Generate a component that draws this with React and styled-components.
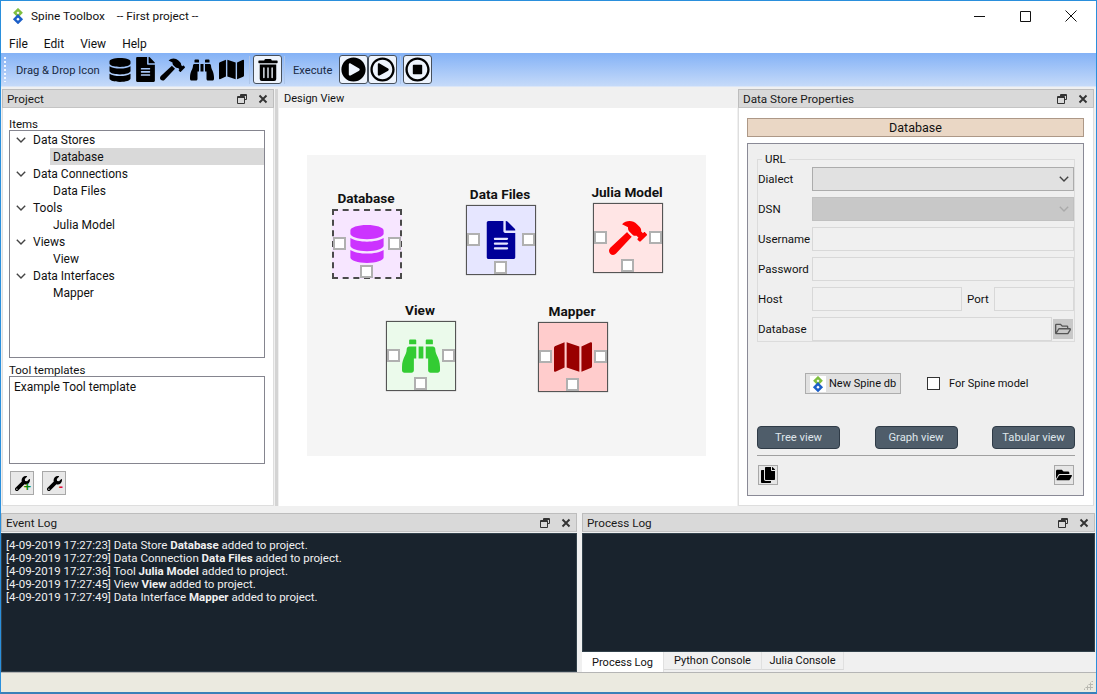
import React from "react";
import styled, { createGlobalStyle } from "styled-components";
import { FaDatabase, FaFileAlt, FaHammer, FaBinoculars, FaMap, FaTrashAlt, FaPlayCircle, FaRegPlayCircle, FaRegStopCircle, FaCopy, FaFolderOpen, FaRegFolderOpen, FaWrench } from "react-icons/fa";

const Global = createGlobalStyle`
  html, body { margin: 0; padding: 0; background: #fff; }
  * { box-sizing: border-box; }
  body { font-family: Roboto, "Open Sans", sans-serif; font-size: 12px; color: #111; }
`;
const Win = styled.div`
  width: 1097px; height: 694px; overflow: hidden; display: flex; flex-direction: column;
  border-top: 1px solid #2a8fdc; border-left: 1px solid #2a8fdc; border-right: 1px solid #2a8fdc; border-bottom: 2px solid #3a80b8;
  background: #f0f0f0;
`;
const TitleBar = styled.div`
  height: 34px; flex: none; background: #fff; display: flex; align-items: center; padding: 0 0 4px 9px; font-size: 11.8px;
`;
const TitleText = styled.span` margin-left: 5px; `;
const ProjectName = styled.span` margin-left: 12px; `;
const WinButtons = styled.div` margin-left: auto; margin-right: 2px; display: flex; `;
const WinButton = styled.div` width: 46px; height: 30px; display: flex; align-items: center; justify-content: center; `;
const MenuBar = styled.div`
  height: 18px; flex: none; background: #fff; display: flex; gap: 16px; padding-left: 8px; align-items: center; font-size: 12px;
`;
const Toolbar = styled.div`
  height: 34px; flex: none; display: flex; align-items: center; position: relative; padding-left: 15px;
  background: linear-gradient(#84b2f6, #c5daf9);
  border-bottom: 1px solid #dbe6f7;
`;
const Grip = styled.div`
  position: absolute; left: 3px; top: 4px; bottom: 4px; width: 2px;
  background: repeating-linear-gradient(#f4f8ff 0 2px, transparent 2px 4px);
`;
const ToolLabel = styled.span` font-size: 11.2px; color: #1a2a44; width: ${p => p.$w}px; white-space: nowrap; padding-top: 2px; `;
const ToolIcon = styled.span` display: flex; width: ${p => p.$w}px; justify-content: center; margin-left: ${p => p.$ml}px; color: #000; `;
const ToolSep = styled.div` width: 1px; height: 28px; background: #aec6ea; margin: 0 ${p => p.$r || 3}px 0 ${p => p.$l || 4}px; `;
const ToolButton = styled.div`
  width: 29px; height: 29px; border: 1px solid #47505c; border-radius: 3px; background: #eef4fd;
  display: flex; align-items: center; justify-content: center; color: #000; margin-left: ${p => p.$ml || 0}px;
`;
const Main = styled.div` height: 422px; flex: none; display: flex; background: #f0f0f0; `;
const Dock = styled.div`
  width: ${p => p.$w}px; flex: none; display: flex; flex-direction: column; margin: 2px 0 3px 1px;
`;
const DockTitle = styled.div`
  height: 19px; flex: none; display: flex; align-items: center; background: #d9d9d9; border: 1px solid #bdbdbd; border-bottom-color: #c4c4c4;
  padding: 0 5px 0 4px; font-size: 11.7px; color: #1a1a1a;
`;
const DockIcons = styled.div` margin-left: auto; display: flex; gap: 11px; align-items: center; `;
const DockBody = styled.div`
  flex: 1; min-height: 0; background: #fff; border: 1px solid #dedede; border-top: 0; display: flex; flex-direction: column;
`;
const Gutter = styled.div` width: ${p => p.$w}px; flex: none; background: ${p => p.$c || "#f0f0f0"}; margin: ${p => p.$m || 0}; `;
const Caption = styled.div` font-size: 11.5px; height: 12px; line-height: 13px; padding-left: 6px; margin-top: ${p => p.$mt}px; `;
const Tree = styled.div` width: 256px; height: 228px; margin-left: 6px; border: 1px solid #85858f; `;
const TreeRow = styled.div`
  height: 17px; display: flex; align-items: center; font-size: 12px; padding-left: ${p => p.$child ? 3 : 6}px;
  margin-left: ${p => p.$child ? 40 : 0}px; background: ${p => p.$on ? "#d9d9d9" : "transparent"};
`;
const Chevron = styled.span` display: flex; width: 17px; `;
const ListBox = styled.div` width: 256px; height: 88px; margin-left: 6px; border: 1px solid #85858f; padding: 3px 4px; font-size: 12px; `;
const SquareRow = styled.div` display: flex; gap: 8px; padding: 7px 0 0 7px; `;
const SquareButton = styled.div`
  position: relative; width: 24px; height: 24px; border: 1px solid #a8a8a8; background: #e8e8e8; display: flex; align-items: center; justify-content: center; color: #000;
`;
const Badge = styled.span` position: absolute; right: 2px; bottom: 3px; font: bold 13px/9px "Liberation Sans", sans-serif; color: ${p => p.$c}; `;
const DesignTitle = styled.div` height: 19px; flex: none; display: flex; align-items: center; padding-left: 5px; font-size: 11px; background: #f0f0f0; `;
const DesignBody = styled.div` flex: 1; background: #fff; padding: 47px 0 0 28px; `;
const Scene = styled.div` position: relative; width: 399px; height: 301px; background: #f5f5f5; `;
const Node = styled.div`
  position: absolute; left: ${p => p.$x}px; top: ${p => p.$y}px; width: 70px; height: 70px; background: ${p => p.$bg};
  border: 1px solid ${p => p.$sel ? "transparent" : "#555"}; box-shadow: ${p => p.$sel ? "none" : "0 0 1px #888"};
  outline: ${p => p.$sel ? "2px dashed #4a4a4a" : "none"}; outline-offset: -2px;
  display: flex; align-items: center; justify-content: center; color: ${p => p.$fg};
`;
const NodeLabel = styled.div`
  position: absolute; left: -21px; right: -19px; top: -20px; text-align: center; font-weight: 700; font-size: 13.6px; line-height: 16px; color: #111; white-space: nowrap;
`;
const Port = styled.div`
  position: absolute; width: 13px; height: 13px; background: #fff; border: 2px solid #b0b0b0;
  ${p => p.$side === "l" ? "left: 0; top: 27px;" : p.$side === "r" ? "right: 0; top: 27px;" : "left: 27px; bottom: 0;"}
`;
const PropHeader = styled.div`
  height: 19px; margin: 10px 9px 6px 8px; flex: none; background: #ead7c5; border: 1px solid #ad9887; display: flex; align-items: center; justify-content: center; font-size: 12.5px;
`;
const Form = styled.div` flex: none; height: 353px; margin: 0 9px 0 8px; background: #efefef; border: 1px solid #8a8a96; display: flex; flex-direction: column; padding: 15px 8px 0 9px; position: relative; `;
const Fieldset = styled.div` position: relative; height: 183px; border: 1px solid #dcdcdc; padding-top: 7px; display: flex; flex-direction: column; gap: 6px; `;
const Legend = styled.span` position: absolute; left: 4px; top: -8px; background: #efefef; padding: 0 3px; font-size: 11.5px; line-height: 14px; `;
const FormRow = styled.div` display: flex; align-items: center; height: 24px; `;
const FormLabel = styled.span` width: 54px; flex: none; font-size: 11.5px; `;
const Combo = styled.div`
  flex: 1; height: 24px; background: ${p => p.$off ? "#c8c8c8" : "#e1e1e1"}; border: 1px solid ${p => p.$off ? "#c0c0c0" : "#acacac"}; display: flex; align-items: center; justify-content: flex-end; padding-right: 4px;
`;
const Input = styled.div` flex: ${p => p.$w ? "none" : 1}; width: ${p => p.$w ? p.$w + "px" : "auto"}; height: 24px; background: #f0f0f0; border: 1px solid #d8d8d8; `;
const PortLabel = styled.span` font-size: 11.5px; margin: 0 5px 0 5px; `;
const BrowseButton = styled.div` width: 20px; height: 20px; margin: 0 1px; background: #c8c8c8; display: flex; align-items: center; justify-content: center; color: #555; `;
const NewRow = styled.div` display: flex; align-items: center; margin: 31px 0 0 48px; height: 21px; `;
const NewButton = styled.div` width: 96px; height: 21px; background: #e1e1e1; border: 1px solid #adadad; display: flex; align-items: center; padding-left: 4px; gap: 3px; font-size: 11px; white-space: nowrap; `;
const LogoBack = styled.span` display: flex; background: #fff; `;
const Check = styled.div` width: 13px; height: 13px; margin-left: 26px; border: 1px solid #333; background: #fff; `;
const CheckLabel = styled.span` font-size: 11px; margin-left: 9px; `;
const ViewRow = styled.div` display: flex; justify-content: space-between; margin-top: 32px; `;
const ViewButton = styled.div`
  width: 83px; height: 23px; background: #4f5d6a; border: 1px solid #2f3b47; border-radius: 4px; color: #dfe6ea; font-size: 11.2px; display: flex; align-items: center; justify-content: center;
`;
const Rule = styled.div` height: 1px; background: #a0a0a0; margin-top: 6px; `;
const FootRow = styled.div` display: flex; justify-content: space-between; padding: 9px 1px 0; `;
const FootButton = styled.div` width: 20px; height: 20px; background: #e6e6e6; border: 1px solid #a8a8a8; display: flex; align-items: center; justify-content: center; color: #000; `;
const Bottom = styled.div` height: 163px; flex: none; display: flex; gap: 5px; background: #f0f0f0; padding-top: 4px; `;
const BottomDock = styled.div` width: ${p => p.$w}px; flex: none; display: flex; flex-direction: column; `;
const Terminal = styled.div`
  flex: 1; margin-top: 1px; background: #19232d; border: 1px solid #32414b; color: #f0f0f0; font-size: 11.5px; line-height: 13px; padding: 5px 4px; white-space: nowrap;
`;
const LogLine = styled.div``;
const Tabs = styled.div` height: 20px; flex: none; display: flex; align-items: flex-end; background: #f0f0f0; `;
const Tab = styled.div`
  height: ${p => p.$on ? 20 : 18}px; width: ${p => p.$w}px; display: flex; align-items: center; justify-content: center; font-size: 11px;
  background: ${p => p.$on ? "#fff" : "#f0f0f0"}; border-right: 1px solid #e0e0e0; border-bottom: ${p => p.$on ? 0 : "1px solid #d9d9d9"}; align-self: flex-start;
`;
const Status = styled.div`
  flex: 1; background: #ebeae0; border-top: 1px solid #b5b5b5; position: relative;
`;
const SizeGrip = styled.div`
  position: absolute; right: 3px; bottom: 2px; width: 10px; height: 10px;
  background: radial-gradient(circle, #b8b8b0 1px, transparent 1.2px) 0 0 / 3px 3px;
  clip-path: polygon(100% 0, 100% 100%, 0 100%);
`;

const Logo = ({ size = 16 }) => (
  <svg width={size} height={size} viewBox="0 0 16 16" fill="none" strokeWidth="2.4">
    <path d="M8 1.6L11.2 4.8 8 8 4.8 4.8z" stroke="#7fbf3f" />
    <path d="M8 7.8L11.4 11.2 8 14.6 4.6 11.2z" stroke="#1c5fc8" />
  </svg>
);
const ChevronDown = ({ c = "#444" }) => (
  <svg width="10" height="6" viewBox="0 0 10 6"><path d="M.8.8L5 5 9.2.8" fill="none" stroke={c} strokeWidth="1.4" /></svg>
);
const RestoreIcon = () => (
  <svg width="10" height="10" viewBox="0 0 10 10" fill="none" stroke="#333" strokeWidth="1">
    <path d="M3.5 2.5V.5h6v5h-2" /><path d="M.5 2.5h7v7h-7z" /><path d="M.5 3.5h7M3.5 1.5h6" />
  </svg>
);
const CloseIcon = () => (
  <svg width="10" height="10" viewBox="0 0 10 10"><path d="M1.5 1.5l7 7M8.5 1.5l-7 7" stroke="#333" strokeWidth="1.9" /></svg>
);
const DockControls = () => <DockIcons><RestoreIcon /><CloseIcon /></DockIcons>;

const treeData = [["Data Stores", "Database"], ["Data Connections", "Data Files"], ["Tools", "Julia Model"], ["Views", "View"], ["Data Interfaces", "Mapper"]];
const nodes = [
  { name: "Database", x: 25, y: 54, bg: "#f7e6ff", fg: "#cc33ff", sel: true, Icon: FaDatabase },
  { name: "Data Files", x: 159, y: 50, bg: "#e6e6ff", fg: "#000099", Icon: FaFileAlt },
  { name: "Julia Model", x: 286, y: 48, bg: "#ffe5e5", fg: "#ff0000", Icon: FaHammer },
  { name: "View", x: 79, y: 166, bg: "#ebfaeb", fg: "#33cc33", Icon: FaBinoculars },
  { name: "Mapper", x: 231, y: 167, bg: "#ffcccc", fg: "#990000", Icon: FaMap },
];
const logs = [
  ["[4-09-2019 17:27:23] Data Store ", "Database"],
  ["[4-09-2019 17:27:29] Data Connection ", "Data Files"],
  ["[4-09-2019 17:27:36] Tool ", "Julia Model"],
  ["[4-09-2019 17:27:45] View ", "View"],
  ["[4-09-2019 17:27:49] Data Interface ", "Mapper"],
];

export default function App() {
  return (
    <Win>
      <Global />
      <TitleBar>
        <Logo />
        <TitleText>Spine Toolbox</TitleText>
        <ProjectName>-- First project --</ProjectName>
        <WinButtons>
          <WinButton><svg width="11" height="11" viewBox="0 0 11 11"><path d="M0 5.5h11" stroke="#111" /></svg></WinButton>
          <WinButton><svg width="11" height="11" viewBox="0 0 11 11"><path d="M.5.5h10v10H.5z" fill="none" stroke="#111" /></svg></WinButton>
          <WinButton><svg width="12" height="12" viewBox="0 0 12 12"><path d="M.5.5l11 11M11.5.5l-11 11" stroke="#111" /></svg></WinButton>
        </WinButtons>
      </TitleBar>
      <MenuBar><span>File</span><span>Edit</span><span>View</span><span>Help</span></MenuBar>
      <Toolbar>
        <Grip />
        <ToolLabel $w={85}>Drag &amp; Drop Icon</ToolLabel>
        <ToolIcon $w={22} $ml={8}><FaDatabase size={24} /></ToolIcon>
        <ToolIcon $w={19} $ml={5}><FaFileAlt size={25} /></ToolIcon>
        <ToolIcon $w={25} $ml={5}><FaHammer size={25} /></ToolIcon>
        <ToolIcon $w={24} $ml={5}><FaBinoculars size={24} /></ToolIcon>
        <ToolIcon $w={25} $ml={5}><FaMap size={25} /></ToolIcon>
        <ToolSep $l={5} />
        <ToolButton><FaTrashAlt size={22} /></ToolButton>
        <ToolSep $l={2} $r={8} />
        <ToolLabel $w={39}>Execute</ToolLabel>
        <ToolButton $ml={7}><FaPlayCircle size={25} /></ToolButton>
        <ToolButton><FaRegPlayCircle size={25} /></ToolButton>
        <ToolSep $l={3} $r={2} />
        <ToolButton><FaRegStopCircle size={25} /></ToolButton>
      </Toolbar>
      <Main>
        <Dock $w={272}>
          <DockTitle>Project<DockControls /></DockTitle>
          <DockBody>
            <Caption $mt={10}>Items</Caption>
            <Tree>
              {treeData.map(([a, b]) => (
                <React.Fragment key={a}>
                  <TreeRow><Chevron><ChevronDown /></Chevron>{a}</TreeRow>
                  <TreeRow $child $on={b === "Database"}>{b}</TreeRow>
                </React.Fragment>
              ))}
            </Tree>
            <Caption $mt={6}>Tool templates</Caption>
            <ListBox>Example Tool template</ListBox>
            <SquareRow>
              <SquareButton><FaWrench size={15} /><Badge $c="#0a8a0a">+</Badge></SquareButton>
              <SquareButton><FaWrench size={15} /><Badge $c="#e01030">-</Badge></SquareButton>
            </SquareRow>
          </DockBody>
        </Dock>
        <Gutter $w={1} />
        <Gutter $w={3} $c="#d4d4d4" $m="2px 0 3px" />
        <Dock $w={458}>
          <DesignTitle>Design View</DesignTitle>
          <DesignBody>
            <Scene>
              {nodes.map(n => (
                <Node key={n.name} $x={n.x} $y={n.y} $bg={n.bg} $fg={n.fg} $sel={n.sel}>
                  <NodeLabel>{n.name}</NodeLabel>
                  <n.Icon size={38} />
                  <Port $side="l" /><Port $side="r" /><Port $side="b" />
                </Node>
              ))}
            </Scene>
          </DesignBody>
        </Dock>
        <Dock $w={356}>
          <DockTitle>Data Store Properties<DockControls /></DockTitle>
          <DockBody>
            <PropHeader>Database</PropHeader>
            <Form>
              <Fieldset>
                <Legend>URL</Legend>
                <FormRow><FormLabel>Dialect</FormLabel><Combo><ChevronDown /></Combo></FormRow>
                <FormRow><FormLabel>DSN</FormLabel><Combo $off><ChevronDown c="#aaa" /></Combo></FormRow>
                <FormRow><FormLabel>Username</FormLabel><Input /></FormRow>
                <FormRow><FormLabel>Password</FormLabel><Input /></FormRow>
                <FormRow><FormLabel>Host</FormLabel><Input $w={150} /><PortLabel>Port</PortLabel><Input /></FormRow>
                <FormRow><FormLabel>Database</FormLabel><Input /><BrowseButton><FaRegFolderOpen size={16} /></BrowseButton></FormRow>
              </Fieldset>
              <NewRow>
                <NewButton><LogoBack><Logo /></LogoBack>New Spine db</NewButton>
                <Check />
                <CheckLabel>For Spine model</CheckLabel>
              </NewRow>
              <ViewRow>
                <ViewButton>Tree view</ViewButton>
                <ViewButton>Graph view</ViewButton>
                <ViewButton>Tabular view</ViewButton>
              </ViewRow>
              <Rule />
              <FootRow>
                <FootButton><FaCopy size={16} /></FootButton>
                <FootButton><FaFolderOpen size={16} /></FootButton>
              </FootRow>
            </Form>
          </DockBody>
        </Dock>
      </Main>
      <Bottom>
        <BottomDock $w={576}>
          <DockTitle>Event Log<DockControls /></DockTitle>
          <Terminal>
            {logs.map(([a, b]) => <LogLine key={a}>{a}<b>{b}</b> added to project.</LogLine>)}
          </Terminal>
        </BottomDock>
        <BottomDock $w={513}>
          <DockTitle>Process Log<DockControls /></DockTitle>
          <Terminal />
          <Tabs>
            <Tab $on $w={82}>Process Log</Tab>
            <Tab $w={98}>Python Console</Tab>
            <Tab $w={82}>Julia Console</Tab>
          </Tabs>
        </BottomDock>
      </Bottom>
      <Status><SizeGrip /></Status>
    </Win>
  );
}
